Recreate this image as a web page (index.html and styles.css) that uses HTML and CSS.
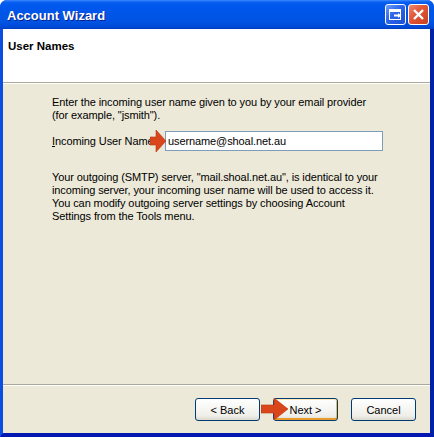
FILE: index.html
```html
<!DOCTYPE html>
<html>
<head>
   <meta http-equiv="Content-Type" content="text/html; charset=UTF-8" />
   <link rel="stylesheet" href="styles.css">
</head>
<body>

<div class="window">
    <div class="titlebar">
        <span class="title">Account Wizard</span>
        <div class="title-buttons">
            <span class="tbtn tbtn-restore">
                <svg width="19" height="19" viewBox="0 0 19 19">
                    <rect x="3.5" y="5.5" width="11" height="9" fill="none" stroke="#fff" stroke-width="1"/>
                    <rect x="3" y="4" width="12" height="3" fill="#fff"/>
                    <path d="M8 10.5 H14" stroke="#fff" stroke-width="2"/>
                    <path d="M12 8 L15 10.5 L12 13 Z" fill="#fff"/>
                </svg>
            </span>
            <span class="tbtn tbtn-close">
                <svg width="19" height="19" viewBox="0 0 19 19">
                    <path d="M5 5 L14 14 M14 5 L5 14" stroke="#fff" stroke-width="2.4"/>
                </svg>
            </span>
        </div>
    </div>

    <div class="frame">
        <div class="header">
            <h1>User Names</h1>
        </div>

        <div class="content">
            <p>Enter the incoming user name given to you by your email provider<br>(for example, "jsmith").</p>

            <div class="field">
                <label><u>I</u>ncoming User Name:</label>
                <input type="text" value="username@shoal.net.au">
                <svg class="pointer pointer-field" width="16" height="22" viewBox="0 0 16 22">
                    <polygon points="0,7 6,7 6,0 16,11 6,22 6,15 0,15" fill="#d9461b" stroke="#b8391a" stroke-width="0.6"/>
                </svg>
            </div>

            <p>Your outgoing (SMTP) server, "mail.shoal.net.au", is identical to your<br>
            incoming server, your incoming user name will be used to access it.<br>
            You can modify outgoing server settings by choosing Account<br>
            Settings from the Tools menu.</p>
        </div>

        <div class="footer">
            <button class="button">&lt; Back</button>
            <button class="button default">Next &gt;</button>
            <button class="button">Cancel</button>
            <svg class="pointer pointer-next" width="27" height="22" viewBox="0 0 27 22">
                <polygon points="0,7 13,7 13,0 27,11 13,22 13,15 0,15" fill="#d9461b" stroke="#b8391a" stroke-width="0.6"/>
            </svg>
        </div>
    </div>
</div>

</body>
</html>
```

FILE: styles.css
```css
* {
    padding: 0; margin: 0;
    box-sizing: border-box;
}
body {
    background: #fff;
    font-family: "Liberation Sans", Arial, sans-serif;
    font-size: 11px;
    letter-spacing: -0.1px;
    color: #000;
}

div.window {
    width: 434px;
    height: 437px;
    display: flex;
    flex-direction: column;
    border-radius: 7px 7px 0 0;
    overflow: hidden;
    background: #0831d9;
}

/* title bar */
div.titlebar {
    height: 29px;
    display: flex;
    align-items: center;
    justify-content: space-between;
    padding: 0 5px 0 7px;
    background: linear-gradient(to bottom, #3d8bff 0, #0a5ff0 2px, #0058ee 5px, #0055e8 14px, #0053e3 22px, #0049d6 27px, #003cbf 29px);
}
span.title {
    color: #fff;
    font-weight: bold;
    font-size: 13px;
    letter-spacing: 0;
    text-shadow: 1px 1px 0 #0a1e8c;
    margin-top: 1px;
}
div.title-buttons {
    display: flex;
    gap: 2px;
}
span.tbtn {
    width: 21px;
    height: 21px;
    border: 1px solid #fff;
    border-radius: 3px;
    display: flex;
    align-items: center;
    justify-content: center;
}
span.tbtn-restore {
    background: linear-gradient(135deg, #6d9dfb 0, #2c65e8 45%, #1d4fd6 100%);
}
span.tbtn-close {
    background: linear-gradient(135deg, #f08a6c 0, #e2583a 40%, #c8401f 100%);
}

/* frame */
div.frame {
    flex: 1;
    display: flex;
    flex-direction: column;
    border-left: 3px solid #0b4ee2;
    border-right: 4px solid #0222a6;
    border-bottom: 4px solid #0318b0;
    background: #ece9d8;
}

div.header {
    height: 54px;
    background: #fff;
    padding: 11px 5px 0 5px;
    border-bottom: 1px solid #aca899;
    box-shadow: 0 1px 0 #fff;
}
h1 {
    font-size: 11.5px;
    font-weight: bold;
    line-height: 13px;
    letter-spacing: 0;
}

div.content {
    flex: 1;
    padding: 13px 20px 0 49px;
}
div.content p {
    line-height: 13px;
}
div.field {
    position: relative;
    display: flex;
    align-items: center;
    margin: 9px 0 20px 0;
}
div.field label {
    width: 113px;
}
div.field input {
    width: 218px;
    height: 20px;
    border: 1px solid #7f9db9;
    background: #fff;
    font-family: "Liberation Sans", Arial, sans-serif;
    font-size: 11px;
    letter-spacing: -0.1px;
    padding: 0 2px;
    color: #000;
}

svg.pointer {
    position: absolute;
}
svg.pointer-field {
    left: 98px;
    top: -1px;
}

div.footer {
    position: relative;
    height: 49px;
    display: flex;
    justify-content: flex-end;
    gap: 13px;
    padding: 13px 14px 0 0;
    border-top: 1px solid #aca899;
    box-shadow: inset 0 1px 0 #fff;
}
button.button {
    width: 65px;
    height: 23px;
    border: 1px solid #003c74;
    border-radius: 3px;
    background: linear-gradient(to bottom, #ffffff 0, #f7f7f4 40%, #efeee9 80%, #dcd9cc 100%);
    font-family: "Liberation Sans", Arial, sans-serif;
    font-size: 11px;
    color: #000;
}
button.default {
    box-shadow: inset 0 1px 0 #ffe9b6, inset 0 -2px 0 #e89a2a, inset 1px 0 0 #fbca6a, inset -1px 0 0 #f5b547;
}
svg.pointer-next {
    left: 258px;
    top: 13px;
}
```
